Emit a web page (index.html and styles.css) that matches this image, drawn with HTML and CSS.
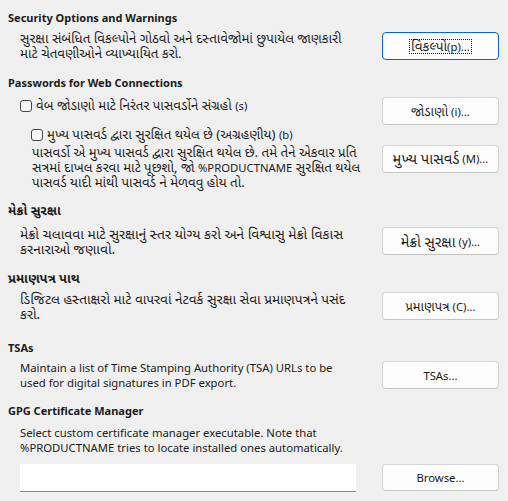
FILE: index.html
```html
<!DOCTYPE html>
<html lang="gu">
<head>
<meta charset="utf-8">
<link rel="stylesheet" href="styles.css">
</head>
<body>
<div class="page">
  <section class="sec s1">
    <h2 class="head">Security Options and Warnings</h2>
    <div class="row">
      <p class="desc gu">સુરક્ષા સંબંધિત વિકલ્પોને ગોઠવો અને દસ્તાવેજોમાં છુપાયેલ જાણકારી<br>માટે ચેતવણીઓને વ્યાખ્યાયિત કરો.</p>
      <button class="btn focused"><span class="focus-ring"><span class="gu">વિકલ્પો</span>(p)...</span></button>
    </div>
  </section>

  <section class="sec s2">
    <h2 class="head">Passwords for Web Connections</h2>
    <div class="row top">
      <label class="check first"><span class="box"></span><span class="gu">વેબ જોડાણો માટે નિરંતર પાસવર્ડોને સંગ્રહો <span class="lat">(s)</span></span></label>
      <button class="btn"><span class="gu">જોડાણો</span>&nbsp;(i)...</button>
    </div>
    <div class="row sub">
      <div class="subblock">
        <label class="check"><span class="box"></span><span class="gu">મુખ્ય પાસવર્ડ દ્વારા સુરક્ષિત થયેલ છે (અગ્રહણીય) <span class="lat">(b)</span></span></label>
        <p class="desc gu">પાસવર્ડો એ મુખ્ય પાસવર્ડ દ્વારા સુરક્ષિત થયેલ છે. તમે તેને એકવાર પ્રતિ<br>સત્રમાં દાખલ કરવા માટે પૂછશો, જો <span class="lat">%PRODUCTNAME</span> સુરક્ષિત થયેલ<br>પાસવર્ડ યાદી માંથી પાસવર્ડ ને મેળવવુ હોય તો.</p>
      </div>
      <button class="btn"><span class="gu b-md">મુખ્ય પાસવર્ડ</span>&nbsp;(M)...</button>
    </div>
  </section>

  <section class="sec s3">
    <h2 class="head gu">મેક્રો સુરક્ષા</h2>
    <div class="row">
      <p class="desc gu wide">મેક્રો ચલાવવા માટે સુરક્ષાનું સ્તર યોગ્ય કરો અને વિશ્વાસુ મેક્રો વિકાસ<br>કરનારાઓ જણાવો.</p>
      <button class="btn"><span class="gu b-lg">મેક્રો સુરક્ષા</span>&nbsp;(y)...</button>
    </div>
  </section>

  <section class="sec s4">
    <h2 class="head gu">પ્રમાણપત્ર પાથ</h2>
    <div class="row">
      <p class="desc gu mid">ડિજિટલ હસ્તાક્ષરો માટે વાપરવાં નેટવર્ક સુરક્ષા સેવા પ્રમાણપત્રને પસંદ<br>કરો.</p>
      <button class="btn"><span class="gu">પ્રમાણપત્ર</span>&nbsp;(C)...</button>
    </div>
  </section>

  <section class="sec s5">
    <h2 class="head">TSAs</h2>
    <div class="row">
      <p class="desc">Maintain a list of Time Stamping Authority (TSA) URLs to be<br>used for digital signatures in PDF export.</p>
      <button class="btn">TSAs...</button>
    </div>
  </section>

  <section class="sec s6">
    <h2 class="head">GPG Certificate Manager</h2>
    <p class="desc gpg">Select custom certificate manager executable. Note that<br>%PRODUCTNAME tries to locate installed ones automatically.</p>
    <div class="row browse">
      <div class="field"></div>
      <button class="btn">Browse...</button>
    </div>
  </section>
</div>
</body>
</html>
```

FILE: styles.css
```css
html, body {
  margin: 0;
  padding: 0;
  background: #f0f0f0;
}
body {
  font-family: "Noto Sans", "Noto Sans Gujarati", "Open Sans", sans-serif;
  font-size: 11.3px;
  line-height: 15px;
  color: #1b1b1b;
}
.gu {
  font-size: 13.3px;
}
.gu.wide {
  font-size: 13.8px;
}
.gu.mid {
  font-size: 13.6px;
}
.lat {
  font-size: 11.3px;
}
.page {
  padding: 10px 9px 0 8px;
  display: flex;
  flex-direction: column;
}
.sec {
  display: flex;
  flex-direction: column;
}
.s1 { margin-bottom: 14px; }
.s2 { margin-bottom: 13px; }
.s3 { margin-bottom: 15px; }
.s4 { margin-bottom: 19px; }
.s5 { margin-bottom: 13px; }
.head {
  margin: 0;
  font-size: 11px;
  line-height: 15px;
  font-weight: 700;
}
.head.gu {
  font-size: 13px;
}
.s1 .head { margin-bottom: 6px; }
.s2 .head { margin-bottom: 7px; }
.s3 .head { margin-bottom: 8px; }
.s4 .head { margin-bottom: 5px; }
.s5 .head { margin-bottom: 5px; }
.s6 .head { margin-bottom: 7px; }
.row {
  display: flex;
  align-items: center;
  justify-content: space-between;
  padding-left: 12px;
}
.row.top {
  align-items: flex-start;
}
.desc {
  margin: 0;
  line-height: 15px;
}
.btn {
  flex: 0 0 auto;
  width: 117px;
  height: 28px;
  box-sizing: border-box;
  background: #fdfdfd;
  border: 1px solid #d4d4d4;
  border-bottom-color: #c4c4c4;
  border-radius: 4px;
  font: inherit;
  font-size: 11.3px;
  line-height: 15px;
  color: #1b1b1b;
  padding: 0;
  display: flex;
  align-items: center;
  justify-content: center;
  white-space: nowrap;
}
.btn .gu {
  font-size: 13px;
}
.btn .gu.b-md {
  font-size: 14.8px;
}
.btn .gu.b-lg {
  font-size: 14.5px;
}
.btn.focused {
  border: 1px solid #0a64c2;
}
.focused .gu {
  font-size: 13.6px;
}
.focus-ring {
  outline: 1px dotted #1b1b1b;
  outline-offset: 0;
  padding: 0 1px;
  line-height: 12px;
  display: inline-block;
}
.check {
  display: flex;
  align-items: center;
  gap: 4px;
  line-height: 15px;
}
.check.first {
  margin-top: 1px;
}
.box {
  flex: 0 0 auto;
  width: 12px;
  height: 12px;
  box-sizing: border-box;
  border: 1px solid #474747;
  border-radius: 3px;
  background: #f7f7f7;
}
.sub {
  margin-top: 2px;
}
.subblock {
  padding-left: 11px;
  display: flex;
  flex-direction: column;
  gap: 3px;
}
.subblock .desc {
  padding-left: 1px;
}
.gpg {
  padding-left: 12px;
}
.browse {
  margin-top: 9px;
  align-items: flex-start;
}
.field {
  width: 336px;
  height: 28px;
  box-sizing: border-box;
  background: #ffffff;
  border-bottom: 1px solid #8a8a8a;
}
.browse .btn {
  height: 27px;
}
```
